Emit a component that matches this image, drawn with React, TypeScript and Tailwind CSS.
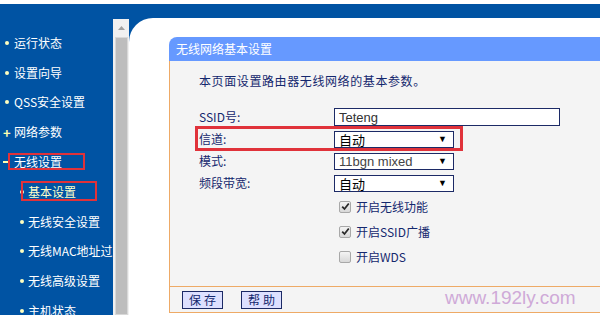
import React from 'react';

const cjk = { fontFamily: '"Noto Sans CJK SC", "Liberation Sans", sans-serif' };
const arial = { fontFamily: '"Liberation Sans", Arial, sans-serif' };

type NavItem = { label: string; mark: 'dot' | 'plus' | 'minus'; sub?: boolean; boxed?: boolean; active?: boolean };

const navItems: NavItem[] = [
  { label: '运行状态', mark: 'dot' },
  { label: '设置向导', mark: 'dot' },
  { label: 'QSS安全设置', mark: 'dot' },
  { label: '网络参数', mark: 'plus' },
  { label: '无线设置', mark: 'minus', boxed: true },
  { label: '基本设置', mark: 'dot', sub: true, boxed: true, active: true },
  { label: '无线安全设置', mark: 'dot', sub: true },
  { label: '无线MAC地址过滤', mark: 'dot', sub: true },
  { label: '无线高级设置', mark: 'dot', sub: true },
  { label: '主机状态', mark: 'dot', sub: true },
];

function Mark({ kind }: { kind: NavItem['mark'] }) {
  if (kind === 'plus')
    return <span className="shrink-0 text-[#ffffb0] text-[13px] leading-none font-bold w-[8px]">+</span>;
  if (kind === 'minus') return <span className="shrink-0 block w-[6px] h-[2px] bg-[#ffffb0] mr-[2px]" />;
  return <span className="shrink-0 block w-[4px] h-[4px] rounded-full bg-[#ffffc0] mx-[2px]" />;
}

function Sidebar() {
  return (
    <nav className="w-[113px] shrink-0 pt-[24px] overflow-hidden" style={cjk}>
      {navItems.map((it) => (
        <div
          key={it.label}
          className={`h-[29.8px] flex items-center whitespace-nowrap ${it.sub ? 'pl-[18px]' : 'pl-[3px]'}`}
        >
          <Mark kind={it.mark} />
          <span
            className={`relative shrink-0 text-[12px] leading-none ${it.sub ? 'ml-[2px]' : 'ml-[3px]'} ${
              it.active ? 'text-[#ffffc8]' : 'text-white'
            }`}
          >
            {it.label}
            {it.boxed && (
              <span
                className={`absolute border-2 border-[#e0323a] ${
                  it.sub ? 'left-[-7px] top-[-5px] w-[76px] h-[20px]' : 'left-[-6px] top-[-3px] w-[77px] h-[17px]'
                }`}
              />
            )}
          </span>
        </div>
      ))}
    </nav>
  );
}

function Scrollbar() {
  return (
    <div className="w-[16px] shrink-0 mt-[15px] bg-[#f0f0f0] flex flex-col items-center">
      <div className="h-[18px] flex items-center justify-center">
        <svg width="7" height="4" viewBox="0 0 7 4">
          <path d="M0 4 L3.5 0 L7 4 Z" fill="#a0a0a0" />
        </svg>
      </div>
      <div className="w-[13px] flex-1 bg-[#bdbdbd] border border-[#d8d8d8]" />
    </div>
  );
}

function Select({ value, latin }: { value: string; latin?: boolean }) {
  return (
    <div className="w-[120px] h-[17px] border border-[#1c2a66] bg-white flex items-center justify-between pl-[4px] pr-[6px]">
      <span className={`text-[13px] leading-none ${latin ? 'text-[#444]' : 'text-black'}`} style={latin ? arial : cjk}>
        {value}
      </span>
      <span className="text-[9px] leading-none text-black" style={arial}>
        ▼
      </span>
    </div>
  );
}

function Check({ checked, label }: { checked: boolean; label: string }) {
  return (
    <div className="h-[25px] flex items-center pl-[140px]">
      <span className="w-[12px] h-[12px] rounded-[2px] border border-[#a8a8a8] bg-gradient-to-b from-[#f4f4f4] to-[#d8d8d8] flex items-center justify-center">
        {checked && (
          <svg width="9" height="9" viewBox="0 0 9 9">
            <path d="M1.2 4.6 L3.5 7 L7.8 1.5" stroke="#2a2a2a" strokeWidth="1.8" fill="none" />
          </svg>
        )}
      </span>
      <span className="ml-[5px] text-[12px] leading-none text-[#14286e]">{label}</span>
    </div>
  );
}

function Label({ children }: { children: React.ReactNode }) {
  return <span className="w-[135px] shrink-0 text-[12px] leading-none text-[#14286e]">{children}</span>;
}

function Panel() {
  return (
    <section className="w-[470px]" style={cjk}>
      <div className="h-[24px] bg-[#6699ff] rounded-tl-[8px] flex items-center pl-[7px]">
        <span className="text-[12px] leading-none text-white">无线网络基本设置</span>
      </div>
      <div className="bg-[#f4f4f4] border-l border-[#eeaa66] pl-[29px] pt-[14px] h-[225px]">
        <p className="text-[12px] leading-none text-[#14286e] tracking-[0.6px]">本页面设置路由器无线网络的基本参数。</p>
        <div className="mt-[19px]">
          <div className="h-[22px] flex items-center">
            <Label>SSID号:</Label>
            <div className="w-[226px] h-[18px] border border-[#1c2a66] bg-white flex items-center pl-[4px]">
              <span className="text-[13px] leading-none text-[#333]" style={arial}>
                Teteng
              </span>
            </div>
          </div>
          <div className="relative h-[22px] flex items-center">
            <Label>信道:</Label>
            <Select value="自动" />
            <span className="absolute left-[-4px] top-[-2px] w-[268px] h-[25px] border-[3px] border-[#e0323a]" />
          </div>
          <div className="h-[22px] flex items-center">
            <Label>模式:</Label>
            <Select value="11bgn mixed" latin />
          </div>
          <div className="h-[22px] flex items-center">
            <Label>频段带宽:</Label>
            <Select value="自动" />
          </div>
          <div>
            <Check checked label="开启无线功能" />
            <Check checked label="开启SSID广播" />
            <Check checked={false} label="开启WDS" />
          </div>
        </div>
      </div>
      <div className="relative h-[27px] bg-[#f4f4f4] border-l border-y border-[#eeaa66] flex items-center pl-[12px] gap-[18px]">
        <button className="w-[41px] h-[18px] bg-[#dde0ff] border border-[#1c2a66] text-[12px] leading-none text-[#14286e] tracking-[3px] pl-[3px]">
          保存
        </button>
        <button className="w-[41px] h-[18px] bg-[#dde0ff] border border-[#1c2a66] text-[12px] leading-none text-[#14286e] tracking-[3px] pl-[3px]">
          帮助
        </button>
        <span className="absolute left-[275px] top-[1px] text-[19px] leading-none text-[#cfaad8]" style={arial}>
          www.192ly.com
        </span>
      </div>
    </section>
  );
}

export default function App() {
  return (
    <div className="w-[600px] h-[315px] overflow-hidden bg-white pt-[4px]">
      <div className="flex h-[311px] bg-[#0053a3]">
        <Sidebar />
        <Scrollbar />
        <main className="flex-1 mt-[14px] bg-white rounded-tl-[24px] pl-[40px] pt-[19px] overflow-hidden">
          <Panel />
        </main>
      </div>
    </div>
  );
}
